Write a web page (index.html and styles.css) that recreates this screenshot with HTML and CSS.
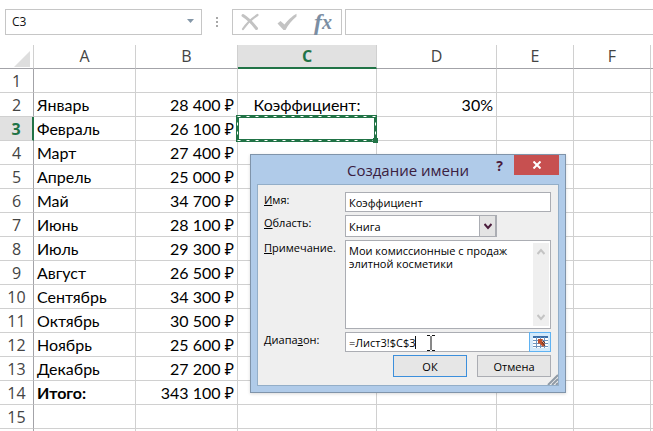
FILE: index.html
```html
<!DOCTYPE html>
<html lang="ru">
<head>
    <meta charset="UTF-8">
    <meta name="viewport" content="width=device-width, initial-scale=1.0">
    <title>Создание имени</title>
    <link rel="stylesheet" href="styles.css">
</head>
<body>
    <div class="formula-bar">
        <div class="name-box">
            <input type="text" value="C3" aria-label="Имя ячейки">
            <svg class="name-arrow" width="7" height="4" viewBox="0 0 7 4"><path d="M0 0h7L3.5 4z" fill="#8497a8"/></svg>
        </div>
        <div class="dots"><i></i><i></i><i></i></div>
        <div class="fx-box">
            <button type="button" aria-label="Отмена ввода">
                <svg width="18" height="18" viewBox="0 0 18 18" fill="none" stroke="#c3c3c3" stroke-linecap="round"><path d="M2 2.500C6 5 12 11 15.500 15.500" stroke-width="3"/><path d="M16.500 2C11 5.500 6 10 2 16" stroke-width="2.200"/></svg>
            </button>
            <button type="button" aria-label="Ввод">
                <svg width="20" height="18" viewBox="0 0 20 18"><path d="M.5 10.500l3-2.500 4 3.500C10.500 8 15 3 19.500.8v2.700C15 7 11 12 8.500 17H6.500z" fill="#c3c3c3"/></svg>
            </button>
            <button type="button" class="fx" aria-label="Вставить функцию">f<span>x</span></button>
        </div>
        <input class="formula" type="text" aria-label="Строка формул">
    </div>

    <div class="sheet-area">
    <table class="sheet">
        <colgroup>
            <col class="col-num"><col class="col-a"><col class="col-a"><col class="col-c"><col class="col-d"><col class="col-e"><col class="col-e"><col>
        </colgroup>
        <thead>
            <tr><th class="corner"><svg width="16" height="16" viewBox="0 0 16 16"><path d="M16 0v16H0z" fill="#dedede"/></svg></th><th>A</th><th>B</th><th class="active">C</th><th>D</th><th>E</th><th>F</th><th></th></tr>
        </thead>
        <tbody>
            <tr><th>1</th><td></td><td></td><td></td><td></td><td></td><td></td><td></td></tr>
            <tr><th>2</th><td>Январь</td><td class="num">28 400 ₽</td><td class="mid">Коэффициент:</td><td class="num">30%</td><td></td><td></td><td></td></tr>
            <tr><th class="active">3</th><td>Февраль</td><td class="num">26 100 ₽</td><td class="selected"><svg class="ants" width="142" height="28"><rect x="1.500" y="1.500" width="138" height="24"/><rect class="dash" x="1.500" y="1.500" width="138" height="24"/><path class="handle" d="M137 23h5v5h-5z"/></svg></td><td></td><td></td><td></td><td></td></tr>
            <tr><th>4</th><td>Март</td><td class="num">27 400 ₽</td><td></td><td></td><td></td><td></td><td></td></tr>
            <tr><th>5</th><td>Апрель</td><td class="num">25 000 ₽</td><td></td><td></td><td></td><td></td><td></td></tr>
            <tr><th>6</th><td>Май</td><td class="num">34 700 ₽</td><td></td><td></td><td></td><td></td><td></td></tr>
            <tr><th>7</th><td>Июнь</td><td class="num">28 100 ₽</td><td></td><td></td><td></td><td></td><td></td></tr>
            <tr><th>8</th><td>Июль</td><td class="num">29 300 ₽</td><td></td><td></td><td></td><td></td><td></td></tr>
            <tr><th>9</th><td>Август</td><td class="num">26 500 ₽</td><td></td><td></td><td></td><td></td><td></td></tr>
            <tr><th>10</th><td>Сентябрь</td><td class="num">34 300 ₽</td><td></td><td></td><td></td><td></td><td></td></tr>
            <tr><th>11</th><td>Октябрь</td><td class="num">30 500 ₽</td><td></td><td></td><td></td><td></td><td></td></tr>
            <tr><th>12</th><td>Ноябрь</td><td class="num">25 600 ₽</td><td></td><td></td><td></td><td></td><td></td></tr>
            <tr><th>13</th><td>Декабрь</td><td class="num">27 200 ₽</td><td></td><td></td><td></td><td></td><td></td></tr>
            <tr><th>14</th><td><b>Итого:</b></td><td class="num">343 100 ₽</td><td></td><td></td><td></td><td></td><td></td></tr>
            <tr><th>15</th><td></td><td></td><td></td><td></td><td></td><td></td><td></td></tr>
            <tr><th></th><td></td><td></td><td></td><td></td><td></td><td></td><td></td></tr>
        </tbody>
    </table>
    </div>

    <form class="dialog" role="dialog" aria-labelledby="dlg-title">
        <div class="title-bar">
            <h1 id="dlg-title">Создание имени</h1>
            <div class="title-buttons">
                <button type="button" class="help">?</button>
                <button type="button" class="close" aria-label="Закрыть"><svg width="8" height="8" viewBox="0 0 8 8"><path d="M.5.500l7 7M7.500.500l-7 7" stroke="#fff" stroke-width="2"/></svg></button>
            </div>
        </div>
        <div class="dialog-body">
            <div class="fields">
                <label for="name"><u>И</u>мя:</label>
                <input type="text" id="name" value="Коэффициент">

                <label for="scope"><u>О</u>бласть:</label>
                <div class="select-wrap">
                    <select id="scope"><option>Книга</option></select>
                    <span class="select-arrow"><svg width="8" height="7" viewBox="0 0 8 7"><path d="M.5 1L4 5 7.500 1" fill="none" stroke="#4b1c3c" stroke-width="2"/></svg></span>
                </div>

                <label for="note"><u>П</u>римечание.</label>
                <div class="note-wrap">
                    <textarea id="note">Мои комиссионные с продаж элитной косметики</textarea>
                    <div class="scrollbar">
                        <svg width="8" height="7" viewBox="0 0 8 7"><path d="M.5 6L4 2l3.500 4" fill="none" stroke="#c4c4c4" stroke-width="2"/></svg>
                        <svg width="8" height="7" viewBox="0 0 8 7"><path d="M.5 1L4 5 7.500 1" fill="none" stroke="#c4c4c4" stroke-width="2"/></svg>
                    </div>
                </div>

                <label for="range">Диапа<u>з</u>он:</label>
                <div class="range-wrap">
                    <input type="text" id="range" value="=Лист3!$C$3">
                    <svg class="cursor" width="26" height="16" viewBox="0 0 26 16"><path d="M.5 1v13M12 .5h3M17 .5h3M16 1v14M12 15.500h3M17 15.500h3" fill="none" stroke="#111"/></svg>
                    <button type="button" aria-label="Выбрать диапазон">
                        <svg width="15" height="12" viewBox="0 0 15 12">
                            <path fill="#fff" d="M0 0h15v12H0z"/>
                            <path fill="#3b6ea8" d="M0 0h15v2H0z"/>
                            <path d="M0 4.500h15M0 7.500h15M0 10.500h15M3.500 1v11M7.500 1v11M11.500 1v11" stroke="#6f94bd"/>
                            <path d="M5 3h5L9 5l3 3-2 3-4-4-1 1z" fill="#c0502b"/>
                            <path d="M9 6l3 4M10 5l2 2" stroke="#5d2a1c"/>
                        </svg>
                    </button>
                </div>
            </div>
            <div class="actions">
                <button type="submit" class="default">ОК</button>
                <button type="button">Отмена</button>
            </div>
            <svg class="grip" width="11" height="11" viewBox="0 0 11 11"><path d="M1 11L11 1M5 11l6-6M9 11l2-2" stroke="#8f9aa5" stroke-width="2"/></svg>
        </div>
    </form>
</body>
</html>
```

FILE: styles.css
```css
* {
    box-sizing: border-box;
}
body {
    margin: 0;
    height: 100vh;
    display: flex;
    flex-direction: column;
    position: relative;
    background: #fff;
    color: #111;
    font-family: "Open Sans", "Noto Sans", sans-serif;
    font-size: 12px;
}
button, input, select, textarea {
    font: inherit;
    color: inherit;
    margin: 0;
    padding: 0;
    border: none;
    border-radius: 0;
    outline: none;
    background: none;
}

/* Formula bar */
.formula-bar {
    display: flex;
    flex-shrink: 0;
    height: 45px;
    padding: 9px 0 10px 5px;
}
.name-box {
    width: 197px;
    display: flex;
    align-items: center;
    padding: 0 7px 2px 6px;
    border: 1px solid #c6c6c6;
}
.name-box input {
    flex: 1;
    min-width: 0;
}
.dots {
    width: 30px;
    display: flex;
    flex-direction: column;
    align-items: center;
    justify-content: center;
    gap: 2px;
}
.dots i {
    width: 2px;
    height: 2px;
    background: #a8a8a8;
}
.fx-box {
    width: 110px;
    display: flex;
    align-items: center;
    justify-content: space-between;
    padding: 0 9px 0 8px;
    border: 1px solid #c6c6c6;
}
.fx-box button {
    display: flex;
}
.fx-box .fx {
    font: italic bold 24px/24px "Liberation Serif", serif;
    color: #7b8ea3;
}
.fx span {
    font-size: 20px;
}
.formula {
    flex: 1;
    min-width: 0;
    margin-left: 3px;
    border: 1px solid #c6c6c6;
    border-right: none;
}

/* Sheet */
.sheet-area {
    flex: 1;
    min-height: 0;
    overflow: hidden;
}
.sheet {
    width: 100%;
    table-layout: fixed;
    border-collapse: separate;
    border-spacing: 0;
}
.col-num { width: 34px; }
.col-a { width: 102px; }
.col-c { width: 139px; }
.col-d { width: 120px; }
.col-e { width: 77px; }
.sheet th, .sheet td {
    height: 24px;
    padding: 0 3px;
    border-right: 1px solid #d0d0d0;
    border-bottom: 1px solid #d0d0d0;
    line-height: 23px;
    white-space: nowrap;
    overflow: hidden;
}
.sheet th {
    font-size: 16px;
    font-weight: normal;
    color: #444;
    padding: 0;
}
.sheet thead th {
    border-bottom-color: #a3a3a8;
}
.sheet tbody th {
    padding-top: 2px;
    line-height: 21px;
    border-right-color: #a3a3a8;
}
.sheet th:last-child, .sheet td:last-child {
    border-right: none;
}
.sheet th.active {
    background: #e1e1e1;
    color: #217346;
    font-weight: bold;
}
.sheet thead th.active {
    border-bottom: 2px solid #217346;
    line-height: 22px;
}
.sheet tbody th.active {
    border-right: 2px solid #217346;
}
.sheet .corner {
    padding: 4px 3px 0 0;
    text-align: right;
    line-height: 0;
}
.sheet td {
    font-family: Lato, "Noto Sans", sans-serif;
    font-size: 16px;
    color: #000;
}
.sheet .num {
    text-align: right;
}
.sheet .mid {
    text-align: center;
}
.sheet .selected {
    position: relative;
    overflow: visible;
}
.ants {
    position: absolute;
    left: -2px;
    top: -2px;
    z-index: 1;
    fill: none;
    stroke: #217346;
    stroke-width: 3;
}
.ants .dash {
    stroke: #fff;
    stroke-width: 1;
    stroke-dasharray: 3 6;
}
.ants .handle {
    fill: #217346;
    stroke: none;
}

/* Dialog */
.dialog {
    position: absolute;
    left: 250px;
    top: 154px;
    z-index: 2;
    width: 316px;
    padding: 0 6px 6px;
    font-size: 11px;
    color: #000;
    background: #b0cbe9;
    border: 1px solid #8094aa;
    box-shadow: 0 1px 3px rgba(0, 0, 0, 0.15);
}
.title-bar {
    position: relative;
    height: 29px;
}
.title-bar h1 {
    margin: 0;
    font-size: 15px;
    font-weight: normal;
    line-height: 30px;
    text-align: center;
    color: #3a2040;
}
.title-buttons {
    position: absolute;
    right: 0;
    top: 0;
    display: flex;
}
.help {
    width: 29px;
    height: 20px;
    font-size: 14px;
    font-weight: bold;
    color: #4b1c3c;
}
.close {
    display: flex;
    align-items: center;
    justify-content: center;
    width: 45px;
    height: 20px;
    background: #c75050;
}
.dialog-body {
    position: relative;
    padding: 7px 7px 8px 6px;
    background: #efefef;
    border: 1px solid #93aec8;
}
.fields {
    display: grid;
    grid-template-columns: 77px 1fr;
    row-gap: 3px;
    column-gap: 4px;
}
.fields label {
    line-height: 15px;
}
.fields input, .fields select, .fields textarea {
    display: block;
    width: 100%;
    height: 20px;
    padding: 0 3px;
    background: #fff;
    border: 1px solid #abadb3;
}
.select-wrap {
    position: relative;
    width: 152px;
}
.fields select {
    height: 22px;
    appearance: none;
}
.select-arrow {
    position: absolute;
    right: 0;
    top: 0;
    display: flex;
    align-items: center;
    justify-content: center;
    width: 18px;
    height: 22px;
    background: #e4e4e4;
    border: 1px solid #abadb3;
    border-right-width: 2px;
    pointer-events: none;
}
.note-wrap {
    position: relative;
}
.fields textarea {
    height: 89px;
    padding: 3px 22px 3px 3px;
    line-height: 13px;
    resize: none;
    overflow: hidden;
}
.scrollbar {
    position: absolute;
    right: 2px;
    top: 3px;
    bottom: 3px;
    width: 16px;
    display: flex;
    flex-direction: column;
    align-items: center;
    justify-content: space-between;
    padding: 5px 0;
    background: #efefef;
}
.range-wrap {
    position: relative;
}
.cursor {
    position: absolute;
    left: 70px;
    top: 3px;
}
.range-wrap button {
    position: absolute;
    right: 0;
    top: 0;
    display: flex;
    align-items: center;
    justify-content: center;
    width: 22px;
    height: 20px;
    background: #d3eafc;
    border: 1px solid #5fb2f2;
}
.actions {
    display: flex;
    justify-content: flex-end;
    gap: 10px;
    margin-top: 3px;
}
.actions button {
    width: 74px;
    height: 22px;
    background: #e6e6e6;
    border: 1px solid #abadb3;
}
.actions .default {
    border-color: #3c8fdc;
}
.grip {
    position: absolute;
    right: 0;
    bottom: 0;
}
```
